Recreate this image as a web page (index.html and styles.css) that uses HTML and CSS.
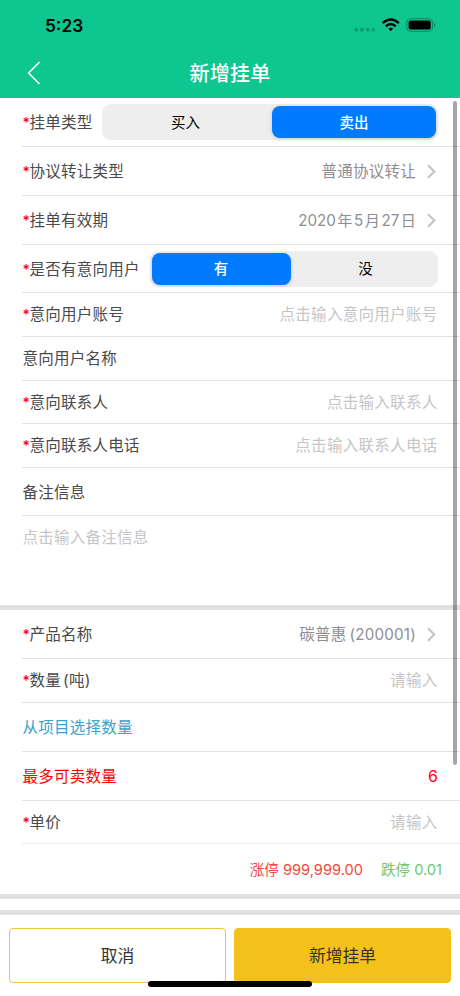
FILE: index.html
```html
<!DOCTYPE html>
<html lang="zh-CN">
<head>
<meta charset="utf-8">
<title>新增挂单</title>
<link rel="stylesheet" href="styles.css">
</head>
<body>
<div class="screen">
  <header class="header">
    <div class="status">
      <span class="time">5:23</span>
      <svg class="status-icons" width="84" height="18" viewBox="0 0 84 18">
        <g fill="#0a9b71"><circle cx="3.3" cy="12.7" r="1.9"/><circle cx="9" cy="12.7" r="1.9"/><circle cx="14.7" cy="12.7" r="1.9"/><circle cx="20.3" cy="12.7" r="1.9"/></g>
        <g fill="none" stroke="#000" stroke-width="2.4"><path d="M29.6 6.2Q37.7-1.4 45.8 6.2"/><path d="M32.7 9.3Q37.7 4.8 42.7 9.3"/></g>
        <path d="M35.2 11.6Q37.7 9.7 40.2 11.6L37.7 14.2Z"/>
        <rect x="53.8" y="1.7" width="25.8" height="12.6" rx="3.8" fill="none" stroke="#078860" stroke-width="1"/>
        <rect x="55.6" y="3.4" width="22.2" height="9.2" rx="2.2"/>
        <path d="M81 5.8Q83.8 8 81 10.2Z" fill="#078860"/>
      </svg>
    </div>
    <div class="nav">
      <svg class="back" width="14" height="26" viewBox="0 0 14 26"><path d="M12.5 2L1.6 13L12.5 24" fill="none" stroke="#fff" stroke-width="1.6"/></svg>
      <h1>新增挂单</h1>
    </div>
  </header>

  <main class="form">
    <div class="row h49">
      <span class="label"><b>*</b>挂单类型</span>
      <div class="segment seg-wide"><span>买入</span><span class="on">卖出</span></div>
    </div>
    <div class="row h49">
      <span class="label"><b>*</b>协议转让类型</span>
      <span class="value">普通协议转让</span>
      <svg class="chev" width="9" height="15" viewBox="0 0 9 15"><path d="M1 1.2L7.3 7.5L1 13.8"/></svg>
    </div>
    <div class="row h49">
      <span class="label"><b>*</b>挂单有效期</span>
      <span class="value date">2020<i>年</i>5<i>月</i>27<i>日</i></span>
      <svg class="chev" width="9" height="15" viewBox="0 0 9 15"><path d="M1 1.2L7.3 7.5L1 13.8"/></svg>
    </div>
    <div class="row h48">
      <span class="label"><b>*</b>是否有意向用户</span>
      <div class="segment seg-narrow"><span class="on">有</span><span>没</span></div>
    </div>
    <div class="row h44"><span class="label"><b>*</b>意向用户账号</span><span class="hint">点击输入意向用户账号</span></div>
    <div class="row h44"><span class="label">意向用户名称</span></div>
    <div class="row h43"><span class="label"><b>*</b>意向联系人</span><span class="hint">点击输入联系人</span></div>
    <div class="row h44"><span class="label"><b>*</b>意向联系人电话</span><span class="hint">点击输入联系人电话</span></div>
    <div class="row h48"><span class="label">备注信息</span></div>
    <div class="memo">点击输入备注信息</div>
    <div class="band"></div>
    <div class="row h49">
      <span class="label"><b>*</b>产品名称</span>
      <span class="value">碳普惠<span class="code">(200001)</span></span>
      <svg class="chev" width="9" height="15" viewBox="0 0 9 15"><path d="M1 1.2L7.3 7.5L1 13.8"/></svg>
    </div>
    <div class="row h44"><span class="label"><b>*</b>数量<span class="unit">(吨)</span></span><span class="hint">请输入</span></div>
    <div class="row h49"><span class="label link">从项目选择数量</span></div>
    <div class="row h49"><span class="label alert">最多可卖数量</span><span class="count">6</span></div>
    <div class="row h43 soft"><span class="label"><b>*</b>单价</span><span class="hint">请输入</span></div>
    <div class="limits"><span class="up">涨停 999,999.00</span><span class="down">跌停 0.01</span></div>
    <div class="band"></div>
    <div class="gap"></div>
    <div class="band"></div>
    <div class="scrollbar"></div>
  </main>

  <footer class="actions">
    <button class="btn cancel">取消</button>
    <button class="btn submit">新增挂单</button>
    <div class="home"></div>
  </footer>
</div>
</body>
</html>
```

FILE: styles.css
```css
* { box-sizing: border-box; }
body { margin: 0; background: #fff; font-family: Inter, "Noto Sans CJK SC", sans-serif; font-size: 15.5px; color: #4a4a4a; }
.screen { width: 460px; height: 996px; display: flex; flex-direction: column; overflow: hidden; }

.header { height: 98px; background: #0dc690; flex: none; }
.status { height: 49px; display: flex; justify-content: space-between; align-items: flex-start; padding: 17px 23px 0 45px; }
.time { font-size: 17.3px; line-height: 18px; font-weight: 600; color: #000; }
.nav { height: 49px; position: relative; display: flex; justify-content: center; align-items: center; }
.nav h1 { margin: 0; font-size: 20px; font-weight: 500; line-height: 28px; color: #fff; letter-spacing: .3px; }
.back { position: absolute; left: 27px; top: 11px; }

.form { position: relative; height: 818px; flex: none; }
.row { margin-left: 22px; padding: 0 22px 0 .5px; display: flex; align-items: center; border-bottom: 1px solid #e2e2e4; line-height: 22px; }
.row.soft { border-bottom-color: #ededef; }
.h49 { height: 49px; }
.h48 { height: 48px; }
.h49 .label, .h49 .value, .h48 .label { padding-top: 2px; }
.h44 { height: 44px; }
.h44 .label, .h44 .hint { padding-top: 1px; }
.h43 { height: 43px; }
.h43 .label, .h43 .hint { padding-top: 1px; }
.label, .value, .hint, .memo { letter-spacing: .25px; white-space: nowrap; }
.label { flex: 1; }
.label b { display: inline-block; width: 7px; letter-spacing: 0; font-size: 14px; font-weight: 500; color: #f00; line-height: 20px; }
.unit { margin-left: 2px; }
.value { color: #8e8e93; }
.value i { font-style: normal; margin: 0 1.5px; }
.value i:last-child { margin-right: 0; }
.date { font-size: 15.2px; letter-spacing: 0; }
.code { margin-left: 3px; font-size: 15.2px; letter-spacing: .2px; }
.hint, .memo { color: #c5c5c7; }
.hint { letter-spacing: .3px; margin-right: .5px; }
.chev { margin-left: 11px; margin-right: 2px; fill: none; stroke: #c3c3c6; stroke-width: 2; }
.link { color: #37a2cf; }
.label.alert { color: #f00; }
.count { color: #f00; font-size: 16px; }

.segment { height: 36px; flex: none; display: flex; padding: 2px; background: #eee; border-radius: 9px; color: #000; font-size: 14.5px; font-weight: 400; }
.segment span { flex: 1; display: flex; justify-content: center; align-items: center; border-radius: 8px; padding-top: 1px; }
.segment .on { color: #fff; font-weight: 500; background: #007aff; box-shadow: 0 1px 4px rgba(0, 0, 0, .15); }
.seg-wide { width: 336px; }
.seg-wide span:first-child { padding-right: 5px; }
.seg-wide .on { flex: 0 0 164px; }
.seg-narrow { width: 288px; margin-right: .5px; }
.seg-narrow span:last-child { padding-left: 5px; }
.seg-narrow .on { flex: 0 0 139px; }

.memo { height: 89px; padding: 10px 22.5px; line-height: 24px; }
.band { height: 5px; background: #e1e1e1; }
.gap { height: 11px; }
.limits { height: 50px; display: flex; justify-content: flex-end; align-items: center; gap: 18px; padding: 0 18px 2px 0; font-size: 14.6px; white-space: nowrap; }
.up { color: #f04b40; }
.down { color: #6bc971; }
.scrollbar { position: absolute; left: 453px; top: 3px; width: 3.5px; height: 664px; border-radius: 2px; background: rgba(0, 0, 0, .35); }

.actions { position: relative; flex: 1; display: flex; gap: 8px; padding: 12px 9px 0; }
.btn { flex: 1; height: 55px; padding: 0; border: 1px solid #f1c33e; border-radius: 4px; background: #fff; color: #333; font: 400 16.8px/24px Inter, "Noto Sans CJK SC", sans-serif; }
.submit { background: #f4c01c; border-color: #f4c01c; }
.home { position: absolute; left: 148px; top: 65px; width: 164px; height: 6px; border-radius: 3px; background: #000; }
```
